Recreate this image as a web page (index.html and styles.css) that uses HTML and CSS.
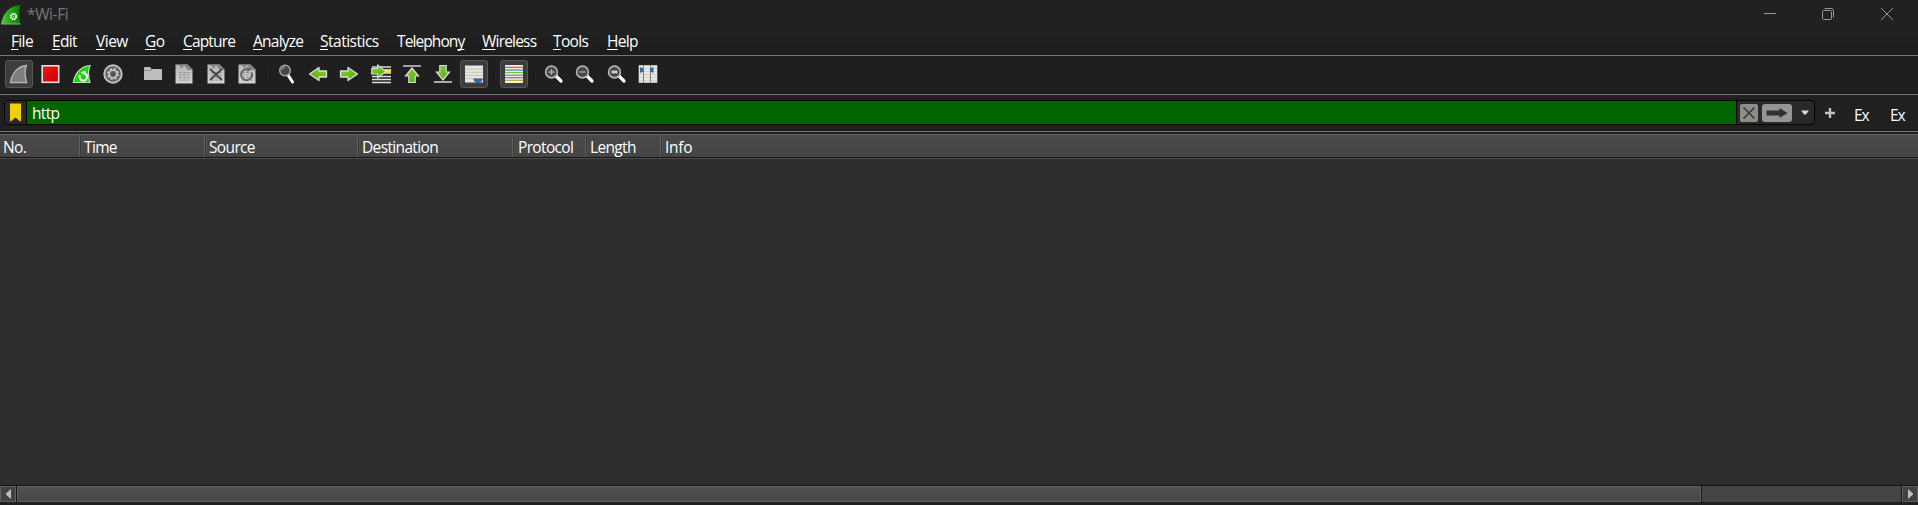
FILE: index.html
```html
<!DOCTYPE html>
<html lang="en">
<head>
<meta charset="utf-8">
<title>*Wi-Fi</title>
<link rel="stylesheet" href="styles.css">
</head>
<body>
<svg width="0" height="0" class="defs">
  <defs>
    <linearGradient id="green" x1="0" y1="0" x2="1" y2="1"><stop offset="0" stop-color="#8ccb3c"/><stop offset="1" stop-color="#4fae08"/></linearGradient>
    <linearGradient id="red" x1="0" y1="0" x2="1" y2="1"><stop offset="0" stop-color="#e81818"/><stop offset="1" stop-color="#cc0000"/></linearGradient>
    <linearGradient id="paper" x1="0" y1="0" x2="0" y2="1"><stop offset="0" stop-color="#b4b4b4"/><stop offset="1" stop-color="#d2d2d2"/></linearGradient>
    <linearGradient id="fin" x1="0" y1="0" x2="1" y2="0"><stop offset="0" stop-color="#4ec63a"/><stop offset=".55" stop-color="#22a014"/><stop offset="1" stop-color="#117508"/></linearGradient>
    <symbol id="page" viewBox="0 0 20 20"><path d="M1.500 .500h12l5 5v14h-17z" fill="url(#paper)"/><path d="M5 1l2.500 4L10 1l3.500 5h5L13.500 .500z" fill="#858585"/><path d="M5 8.500h3M9 8.500h3M13 8.500h2.500M5 11h3M9 11h3M13 11h2.500M5 13.500h3M9 13.500h3M13 13.500h2.500M5 16h3M9 16h3M13 16h2.500" stroke="#929292" stroke-width="1.200"/></symbol>
    <symbol id="glass" viewBox="0 0 20 20"><path d="M11.500 11.500l5.500 5.500" stroke="#fff" stroke-width="3.200" stroke-linecap="round"/><circle cx="7.500" cy="8" r="5.900" fill="#484848" stroke="#b6b6b6" stroke-width="1.600"/></symbol>
    <symbol id="arrow" viewBox="0 0 20 20"><path d="M1.500 7H9V3.500L18.500 10 9 16.500V13H1.500z" fill="url(#green)" stroke="#dedede" stroke-width="1.300" stroke-linejoin="round"/></symbol>
  </defs>
</svg>
<div class="window">
  <header class="titlebar">
    <svg class="app-icon" width="20" height="20" viewBox="0 0 20 20"><path d="M0 19C2 8 8 1 19.500 0 17.500 5 17.500 13 19.500 19z" fill="url(#fin)"/><path d="M0 19h19.500" stroke="#79bd70"/><circle cx="12.500" cy="11.500" r="2.700" fill="none" stroke="#d9eed6" stroke-width="2" stroke-dasharray="1.600 .520"/><circle cx="12.500" cy="11.500" r="2.300" fill="none" stroke="#d9eed6"/><circle cx="12.500" cy="11.500" r=".7" fill="#d9eed6"/></svg>
    <span class="title">*Wi-Fi</span>
    <div class="controls">
      <svg width="14" height="14" viewBox="0 0 14 14"><path d="M2 6.500h12"/></svg>
      <svg width="14" height="14" viewBox="0 0 14 14"><rect x="1.500" y="3.500" width="9" height="9" rx="1"/><path d="M3.500 1.500H10a2.500 2.500 0 0 1 2.500 2.500v6.500"/></svg>
      <svg width="14" height="14" viewBox="0 0 14 14"><path d="M1 1l12 12M13 1L1 13"/></svg>
    </div>
  </header>

  <nav class="menubar">
    <span class="menu file"><u>F</u>ile</span>
    <span class="menu edit"><u>E</u>dit</span>
    <span class="menu view"><u>V</u>iew</span>
    <span class="menu go"><u>G</u>o</span>
    <span class="menu capture"><u>C</u>apture</span>
    <span class="menu analyze"><u>A</u>nalyze</span>
    <span class="menu statistics"><u>S</u>tatistics</span>
    <span class="menu telephony">Telephon<u>y</u></span>
    <span class="menu wireless"><u>W</u>ireless</span>
    <span class="menu tools"><u>T</u>ools</span>
    <span class="menu help"><u>H</u>elp</span>
  </nav>

  <div class="toolbar">
    <div class="tool"><i class="pressed"><svg viewBox="0 0 20 20"><path d="M1.300 18.500C3 9 9 2 17.500 1.500 15.500 6 15.700 12 17.700 18.500z" fill="#7e7e7e" stroke="#b5b5b5" stroke-width="1.300"/></svg></i></div>
    <div class="tool"><svg viewBox="0 0 20 20"><rect x="1.200" y="1.800" width="16.500" height="16.500" fill="url(#red)" stroke="#e4dede" stroke-width="1.600"/></svg></div>
    <div class="tool"><svg viewBox="0 0 20 20"><path d="M1.300 18.500C3 9 9 2 18 1.500 16 6 16 12 18 18.500z" fill="#14d900" stroke="#c5dcc2" stroke-width="1.200"/><path d="M8 11a3.800 3.800 0 1 0 4.500-1.800" fill="none" stroke="#fff" stroke-width="2"/><path d="M8.500 8.500l5-2v5z" fill="#fff"/></svg></div>
    <div class="tool"><svg viewBox="0 0 20 20"><circle cx="10" cy="10" r="8.700" fill="#606060" stroke="#c2c2c2" stroke-width="2"/><circle cx="10" cy="10" r="5.200" fill="none" stroke="#d1d1d1" stroke-width="1.500" stroke-dasharray="2.300 1.780"/><circle cx="10" cy="10" r="3.700" fill="#555" stroke="#ccc" stroke-width="1.600"/></svg></div>
    <span class="sep"></span>
    <div class="tool"><svg viewBox="0 0 20 20"><path d="M1 4q0-1 1-1h5l1.500 2H18q1 0 1 1v10H1z" fill="#bebebe"/><path d="M1 6.500h7l1-1.500" fill="none" stroke="#8d8d8d"/></svg></div>
    <div class="tool"><svg viewBox="0 0 20 20"><use href="#page"/></svg></div>
    <div class="tool"><svg viewBox="0 0 20 20"><use href="#page"/><path d="M4 5l12 11M16 5L4 16" stroke="#444" stroke-width="1.700"/></svg></div>
    <div class="tool"><svg viewBox="0 0 20 20"><use href="#page"/><path d="M14.800 9a5.500 5.500 0 1 1-4.300-3.700" fill="none" stroke="#626262" stroke-width="1.900"/><path d="M9.500 3l5 2-4 3z" fill="#626262"/></svg></div>
    <span class="sep"></span>
    <div class="tool"><svg viewBox="0 0 20 20"><path d="M11 11l4.500 7" stroke="#fff" stroke-width="3" stroke-linecap="round"/><circle cx="8" cy="6.500" r="5.300" fill="#444" stroke="#a7a7a7" stroke-width="1.400"/><path d="M5 6a3.500 3.500 0 0 1 3-2.800" fill="none" stroke="#999" stroke-width="1.300"/></svg></div>
    <div class="tool"><svg viewBox="0 0 20 20"><use href="#arrow" transform="translate(20 0) scale(-1 1)"/></svg></div>
    <div class="tool"><svg viewBox="0 0 20 20"><use href="#arrow"/></svg></div>
    <div class="tool"><svg viewBox="0 0 20 20"><path d="M1 3h19M1 6h19M1 9h19M1 12.500h19M1 15.500h19M1 18.500h19" stroke="#dcdedc" stroke-width="1.600"/><path d="M14 7h6" stroke="#ffdf3d" stroke-width="3.500"/><path d="M.700 4.500h6V1l8 6.500-8 6.500v-4h-6z" fill="url(#green)" stroke="#dcdcdc" stroke-width="1.100"/></svg></div>
    <div class="tool"><svg viewBox="0 0 20 20"><path d="M1 2h18" stroke="#b7b7b7" stroke-width="1.700"/><path d="M10 4l6.500 8h-3.300v6.500H6.800V12H3.500z" fill="url(#green)" stroke="#dedede" stroke-width="1.200"/></svg></div>
    <div class="tool"><svg viewBox="0 0 20 20"><path d="M1 18h18" stroke="#c3c3c3" stroke-width="1.700"/><path d="M6.800 1.500h6.400V8h3.300L10 16 3.500 8h3.300z" fill="url(#green)" stroke="#dedede" stroke-width="1.200"/></svg></div>
    <div class="tool"><i class="pressed"><svg viewBox="0 0 20 20"><path d="M1 1.500h18v17H1z" fill="#e6e7e1"/><path d="M1 5h18M1 8.200h18M1 11.400h18M1 14.600h18" stroke="#c2c4bd"/><path d="M9.500 14.500h9v1.500l-2.500 3h-4l-2.500-3z" fill="#3465a4"/></svg></i></div>
    <span class="sep"></span>
    <div class="tool"><i class="pressed"><svg viewBox="0 0 20 20"><path d="M1 1h18v18H1z" fill="#eeeeea"/><g stroke-width="1.150"><path d="M1 3.300h18" stroke="#ef4444"/><path d="M1 6h18" stroke="#5579ad"/><path d="M1 8.500h18" stroke="#69cc24"/><path d="M1 11.200h18" stroke="#5b82b9"/><path d="M1 13.700h18" stroke="#8a6792"/><path d="M1 16.300h18" stroke="#c9a215"/></g></svg></i></div>
    <span class="sep"></span>
    <div class="tool"><svg viewBox="0 0 20 20"><use href="#glass"/><path d="M4.500 8h6M7.500 5v6" stroke="#aaa" stroke-width="1.300"/></svg></div>
    <div class="tool"><svg viewBox="0 0 20 20"><use href="#glass"/><path d="M4.500 8h6" stroke="#aaa" stroke-width="1.400"/></svg></div>
    <div class="tool"><svg viewBox="0 0 20 20"><use href="#glass"/><path d="M4.500 8h6" stroke="#ccc" stroke-width="2.800"/></svg></div>
    <div class="tool"><svg viewBox="0 0 20 20"><path d="M.700 1.200h18.600v17.600H.700z" fill="#e8e9e4"/><path d="M1 4.500h18M1 7.500h18M1 10.500h18M1 13.500h18M1 16.500h18" stroke="#d2d4ce"/><path d="M5.500 1v18M12.500 1v18" stroke="#84857f" stroke-width="1.100"/><path d="M2 3l3.500 1.500v3L2 9zM15.500 3L12 4.500v3L15.500 9z" fill="#3465a4"/></svg></div>
  </div>

  <div class="filterbar">
    <div class="filter">
      <span class="bookmark"><svg width="11" height="19" viewBox="0 0 11 19"><path d="M0 .500h11v18l-2-1-3.500-3-3.500 3-2 1z" fill="#eed10b"/></svg></span>
      <span class="expression">http</span>
      <span class="clear"><svg width="18" height="18" viewBox="0 0 18 18"><path d="M3.500 3.500l11 11M14.500 3.500l-11 11" stroke="#3a3b38" stroke-width="1.700"/></svg></span>
      <span class="apply"><svg width="30" height="18" viewBox="0 0 30 18"><path d="M4.500 6.500h13V4l8 5-8 5v-2.500h-13z" fill="#30322f"/></svg></span>
      <svg class="drop" width="8" height="5" viewBox="0 0 8 5"><path d="M0 .500h8L5 4.500H3z" fill="#d4d4d4"/></svg>
    </div>
    <svg class="plus" width="10" height="10" viewBox="0 0 10 10"><path d="M0 5h10M5 0v10" stroke="#c2c2c2" stroke-width="2.400"/></svg>
    <span class="ex">Ex</span>
    <span class="ex">Ex</span>
  </div>

  <div class="columns">
    <span class="col no">No.</span>
    <span class="col time">Time</span>
    <span class="col source">Source</span>
    <span class="col destination">Destination</span>
    <span class="col protocol">Protocol</span>
    <span class="col length">Length</span>
    <span class="col info">Info</span>
  </div>
  <main class="packets"></main>
  <div class="scrollbar">
    <span class="step"><svg width="5" height="10" viewBox="0 0 5 10"><path d="M5 0v10L0 5.500v-1z" fill="#bdbdbd"/></svg></span>
    <span class="thumb"></span>
    <span class="track"></span>
    <span class="step"><svg width="5" height="10" viewBox="0 0 5 10"><path d="M0 0v10l5-4.500v-1z" fill="#bdbdbd"/></svg></span>
  </div>
</div>
</body>
</html>
```

FILE: styles.css
```css
* { box-sizing: border-box; }
body { margin: 0; background: #202020; color: #fff; font: 15.500px/20px "Open Sans", "Noto Sans", sans-serif; letter-spacing: -.65px; }
.defs { display: block; height: 0; }
svg { display: block; flex: none; }
.window { display: flex; flex-direction: column; width: 1918px; height: 505px; overflow: hidden; white-space: nowrap; }

.titlebar { display: flex; height: 30px; padding: 0 24px 0 1px; background: #212121; }
.app-icon { margin-top: 5px; }
.title { margin: 4px 0 0 6px; color: #777; letter-spacing: -.4px; }
.controls { display: flex; gap: 45px; margin: 7px 0 0 auto; fill: none; stroke: #999; stroke-width: 1; }

.menubar { display: flex; height: 26px; padding: 1px 0 0 11px; border-bottom: 1px solid #777; background: linear-gradient(#212121, #1c1c1c); }
.menu { flex: none; }
.menu u { text-decoration-thickness: 1px; text-underline-offset: 2px; text-decoration-skip-ink: none; }
.file { width: 41px; }
.edit { width: 44px; }
.view { width: 49px; letter-spacing: -.5px; }
.go { width: 38px; }
.capture { width: 70px; letter-spacing: -.85px; }
.analyze { width: 67px; letter-spacing: -.75px; }
.statistics { width: 77px; letter-spacing: -.5px; }
.telephony { width: 85px; letter-spacing: -.9px; }
.wireless { width: 71px; letter-spacing: -.8px; }
.tools { width: 54px; }

.toolbar { display: flex; align-items: center; height: 39px; padding: 0 0 1px 3.600px; border-bottom: 1px solid #777; background: #1f1f1f; box-shadow: inset 0 -1px #151515; }
.tool { display: grid; place-items: center; flex: none; width: 31.300px; }
.tool svg { width: 20px; height: 20px; }
.pressed { display: grid; place-items: center; width: 28px; height: 28px; border: 1px solid #585858; border-radius: 3px; background: #3d3d3d; }
.toolbar > * { margin-bottom: 1px; }
.sep { flex: none; width: 8.500px; height: 14px; background: linear-gradient(90deg, transparent 4px, #151515 4px, #151515 5px, #292929 5px, #292929 6px, transparent 6px); }

.filterbar { display: flex; height: 37px; padding: 5px 0 0 4px; border-bottom: 1px solid #777; background: #202020; box-shadow: inset 0 -1px #151515; }
.filter { display: flex; align-items: center; flex: none; width: 1811px; height: 25px; border: 1px solid #050505; border-radius: 4px; background: #292929; }
.bookmark { display: grid; place-items: center; flex: none; width: 21px; padding-right: 1px; }
.expression { flex: none; width: 1711px; height: 23px; padding: 2px 0 0 5px; border: solid #050505; border-width: 0 1px; background: #006400; }
.clear { margin-left: 3px; background: #8c8e88; border-radius: 2px; }
.apply { margin-left: 4px; background: #959595; border-radius: 3px; }
.drop { margin-left: 9px; }
.plus { margin: 8px 19px 0 10px; }
.ex { flex: none; width: 36px; margin-top: 5px; letter-spacing: -1px; }

.columns { display: flex; margin-top: 2px; height: 24px; border-top: 1px solid #656565; border-bottom: 1px solid #151515; background: linear-gradient(#494949, #454545); }
.col { height: 22px; padding: 2px 0 0 3px; border-right: 1px solid #606060; box-shadow: 1px 0 #383838, 2px 0 #505050; }
.no { width: 80px; }
.time { width: 125px; padding-left: 4px; }
.source { width: 153px; padding-left: 4px; }
.destination { width: 155px; padding-left: 4px; }
.protocol { width: 73px; padding-left: 5px; }
.length { width: 75px; padding-left: 4px; }
.info { flex: 1; padding-left: 4px; border: 0; box-shadow: none; letter-spacing: -.3px; }
.packets { flex: 1; border-top: 1px solid #4c4c4c; background: #2d2d2d; }

.scrollbar { display: flex; height: 20px; border-top: 1px solid #151515; border-bottom: 3px solid #202020; background: #181818; }
.step { display: grid; place-items: center; width: 16px; border: 1px solid #626262; background: #424242; }
.thumb { width: 1684px; margin-left: 1px; border: 1px solid #626262; background: linear-gradient(#505050, #484848); }
.track { flex: 1; margin: 0 1px; background: #444; }
```
